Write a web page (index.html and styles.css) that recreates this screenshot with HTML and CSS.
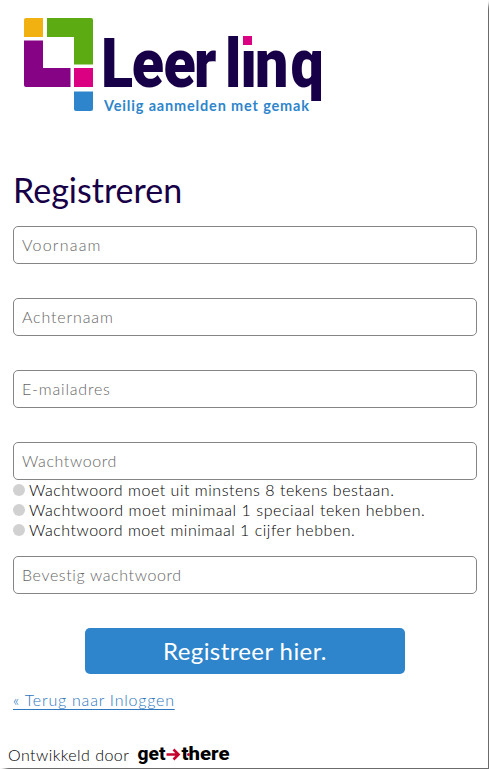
FILE: index.html
```html
<!DOCTYPE html>
<html lang="nl">
<head>
<meta charset="utf-8">
<meta name="viewport" content="width=device-width, initial-scale=1">
<title>Leerlinq - Registreren</title>
<link rel="stylesheet" href="styles.css">
</head>
<body>
<div class="page">
  <header class="brand">
    <svg class="logo" width="310" height="106" viewBox="20 12 310 106" aria-label="Leerlinq">
      <path fill="#f1b211" d="M26 18h17v19H24V20a2 2 0 0 1 2-2z"/>
      <path fill="#5cab12" d="M47 18h44a2 2 0 0 1 2 2v44.500H74V37H47z"/>
      <path fill="#850384" d="M24 40.500h19V68h27.500v19H26a2 2 0 0 1-2-2z"/>
      <path fill="#db0082" d="M74 68h19v19H74z"/>
      <path fill="#2e85cb" d="M74 91.500h19V109a2 2 0 0 1-2 2H76a2 2 0 0 1-2-2z"/>
      <text class="wordmark" transform="scale(.87 1)" y="87" x="116 151.500 188 223 258.500 276.500 293 334">Leerlinq</text>
      <path fill="#fff" d="M241 34h14v14h-14z"/>
      <path fill="#db0082" d="M243 36h9v9h-9z"/>
      <text class="tagline" x="104" y="110.500" textLength="205">Veilig aanmelden met gemak</text>
    </svg>
  </header>
  <main>
    <h1><span>Registreren</span></h1>
    <form class="form">
      <input type="text" class="t-voornaam" placeholder="Voornaam">
      <input type="text" class="t-achternaam" placeholder="Achternaam">
      <input type="text" class="t-email" placeholder="E-mailadres">
      <div class="password">
        <input type="text" class="t-wachtwoord" placeholder="Wachtwoord">
        <ul class="rules">
          <li class="r1">Wachtwoord moet uit minstens 8 tekens bestaan.</li>
          <li class="r2">Wachtwoord moet minimaal 1 speciaal teken hebben.</li>
          <li class="r3">Wachtwoord moet minimaal 1 cijfer hebben.</li>
        </ul>
      </div>
      <input type="text" class="t-bevestig" placeholder="Bevestig wachtwoord">
      <button type="button">Registreer hier.</button>
    </form>
    <a class="back" href="#">« Terug naar Inloggen</a>
  </main>
  <footer>
    <span class="by">Ontwikkeld door</span>
    <svg class="getthere" width="94" height="24" viewBox="136 742 94 24" aria-label="get there">
      <text class="gt" x="137.500" y="760" textLength="28" lengthAdjust="spacingAndGlyphs">get</text>
      <text class="gt" x="181.500" y="760" textLength="48" lengthAdjust="spacingAndGlyphs">there</text>
      <path d="M166.500 754.500h12M173.500 749.500l5 5-5 5" fill="none" stroke="#c4042f" stroke-width="2.600"/>
      <circle cx="188.500" cy="754.500" r="1.500" fill="#c4042f"/>
    </svg>
  </footer>
</div>
</body>
</html>
```
FILE: styles.css
```css
* { box-sizing: border-box; }
html { height: 769px; background: #fff; }
body {
  margin: 0;
  height: 769px;
  overflow: hidden;
  background: #fff;
  color: #000;
  font: 300 16px/20px Lato, sans-serif;
}
.page {
  display: flex;
  flex-direction: column;
  width: 488px;
  height: 768px;
  background: #fff;
  box-shadow: 5px 5px 5px #666;
}
.brand { height: 160px; padding: 12px 0 0 20px; }
.logo, .getthere { display: block; }
.wordmark { font: 900 68px Roboto, sans-serif; fill: #170047; }
.tagline { font: 700 14.500px Lato, sans-serif; fill: #2e85cb; }
main { padding: 0 12px 0 13px; }
h1 {
  margin: 0;
  height: 66px;
  padding-top: 10px;
  color: #170047;
  font-size: 34px;
  font-weight: 400;
  line-height: 40px;
}
.form { display: flex; flex-direction: column; gap: 34px; width: 464px; }
input {
  display: block;
  width: 464px;
  height: 38px;
  padding: 0 8px 2px;
  border: 1px solid #858585;
  border-radius: 5px;
  background: #fff;
  font: inherit;
}
input::placeholder { color: #666; opacity: 1; }
.rules {
  margin: 0 0 -18px;
  padding: 0;
  list-style: none;
}
.rules li { display: flex; align-items: center; height: 20px; gap: 4px; white-space: nowrap; }
.rules li::before { content: ""; width: 12px; height: 12px; border-radius: 50%; background: #d1d1d1; }
.t-voornaam { letter-spacing: 1.2px; }
.t-achternaam { letter-spacing: .85px; }
.t-email { letter-spacing: .8px; }
.t-wachtwoord { letter-spacing: .6px; }
.t-bevestig { letter-spacing: .62px; }
.r1 { letter-spacing: .52px; }
.r2 { letter-spacing: .57px; }
.r3 { letter-spacing: .51px; }
button {
  align-self: center;
  width: 320px;
  height: 46px;
  padding: 0 0 2px;
  border: 0;
  border-radius: 5px;
  background: #2e85cb;
  color: #fff;
  font: 400 24px Lato, sans-serif;
  letter-spacing: .4px;
}
.back { display: inline-block; margin-top: 16px; color: #2e76bd; letter-spacing: .78px; text-underline-offset: 3px; }
footer { display: flex; gap: 7px; margin-top: auto; height: 26px; padding-left: 8px; }
.by { width: 121px; padding-top: 3px; white-space: nowrap; letter-spacing: .45px; }
.gt { font: 800 19px Roboto, sans-serif; fill: #000; }
```
